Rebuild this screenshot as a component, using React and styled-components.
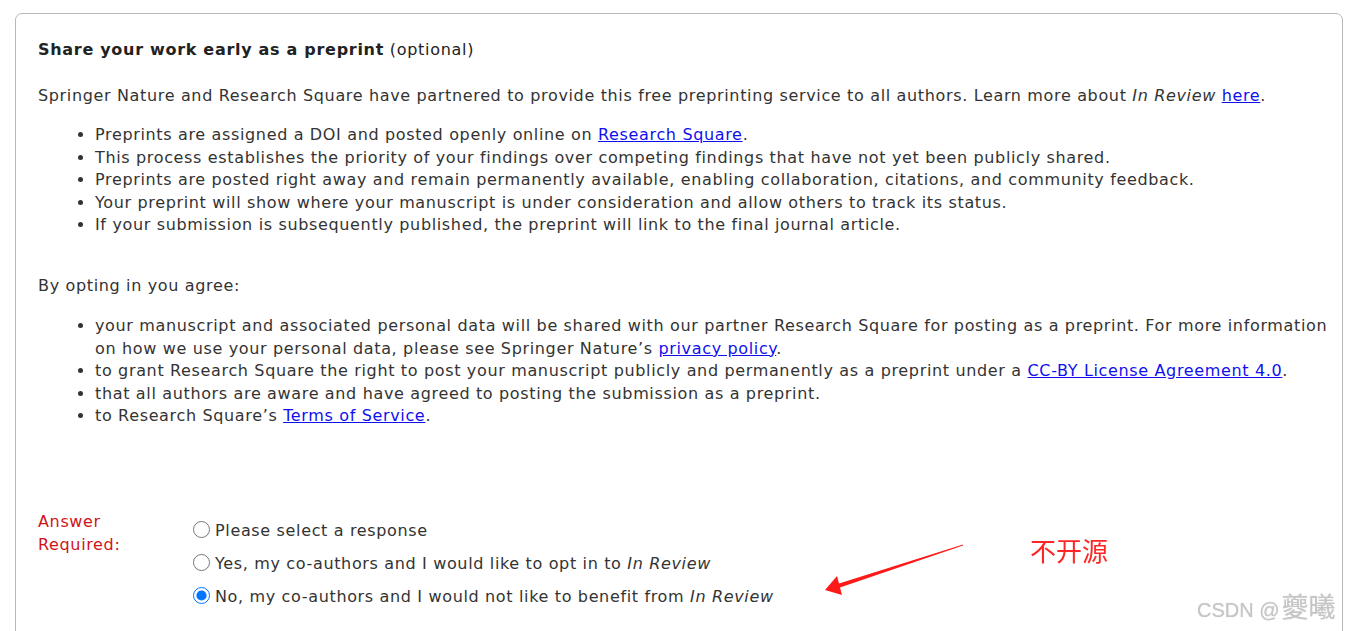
import React from "react";
import styled, { createGlobalStyle } from "styled-components";

const GlobalStyle = createGlobalStyle`
  html, body {
    margin: 0;
    padding: 0;
    overflow: hidden;
    background: #fff;
  }
`;

const Page = styled.div`
  padding: 13px 10px 0 15px;
  font-family: "DejaVu Sans", Verdana, sans-serif;
  font-size: 16px;
  letter-spacing: 0.65px;
  color: #333;
`;

const Card = styled.section`
  border: 1px solid #b8b8b8;
  border-radius: 7px;
  padding: 25px 4px 200px 22px;
  line-height: 22.5px;
`;

const Heading = styled.h2`
  margin: 0;
  font-size: 16px;
  font-weight: normal;
  letter-spacing: 0.7px;
  color: #222;

  b {
    font-weight: bold;
  }
`;

const Para = styled.p`
  margin: ${props => props.top || 0}px 0 0;
`;

const List = styled.ul`
  margin: ${props => props.top}px 0 0;
  padding-left: 57px;
`;

const Link = styled.a`
  color: #1010ee;
  text-decoration: underline;
`;

const AnswerRow = styled.div`
  display: grid;
  grid-template-columns: 155px 1fr;
  margin-top: 82px;
`;

const Required = styled.div`
  color: #d0141a;
  line-height: 23px;
`;

const Options = styled.div`
  display: flex;
  flex-direction: column;
  padding-top: 7px;
`;

const Option = styled.label`
  display: flex;
  align-items: center;
  height: 33px;
  margin-top: ${props => (props.first ? "-2px" : 0)};

  input {
    width: 17px;
    height: 17px;
    margin: 0 5px 4px 0;
  }
`;

const Overlay = styled.svg`
  position: fixed;
  left: 0;
  top: 0;
  pointer-events: none;
`;

const Note = styled.div`
  position: fixed;
  left: 1030px;
  top: 532px;
  font-family: "Noto Sans CJK SC", sans-serif;
  font-size: 26px;
  line-height: 36px;
  letter-spacing: 0;
  color: #ff2525;
`;

const Watermark = styled.div`
  position: fixed;
  left: 1197px;
  top: 591px;
  font-family: "Liberation Sans", "Noto Sans CJK SC", sans-serif;
  font-size: 20px;
  line-height: 30px;
  letter-spacing: 0;
  color: #c6c6c6;
  text-shadow: 0 0 1px rgba(120, 120, 120, 0.35);
  white-space: nowrap;

  span {
    margin-left: 2px;
    font-family: "Noto Sans CJK SC", sans-serif;
    font-size: 27px;
  }
`;

export default function App() {
  return (
    <Page>
      <GlobalStyle />
      <Card>
        <Heading>
          <b>Share your work early as a preprint</b> (optional)
        </Heading>
        <Para top={23}>
          Springer Nature and Research Square have partnered to provide this
          free preprinting service to all authors. Learn more about{" "}
          <i>In Review</i> <Link href="#">here</Link>.
        </Para>
        <List top={17}>
          <li>
            Preprints are assigned a DOI and posted openly online on{" "}
            <Link href="#">Research Square</Link>.
          </li>
          <li>
            This process establishes the priority of your findings over
            competing findings that have not yet been publicly shared.
          </li>
          <li>
            Preprints are posted right away and remain permanently available,
            enabling collaboration, citations, and community feedback.
          </li>
          <li>
            Your preprint will show where your manuscript is under
            consideration and allow others to track its status.
          </li>
          <li>
            If your submission is subsequently published, the preprint will
            link to the final journal article.
          </li>
        </List>
        <Para top={38}>By opting in you agree:</Para>
        <List top={18}>
          <li>
            your manuscript and associated personal data will be shared with
            our partner Research Square for posting as a preprint. For more
            information on how we use your personal data, please see Springer
            Nature’s <Link href="#">privacy policy</Link>.
          </li>
          <li>
            to grant Research Square the right to post your manuscript publicly
            and permanently as a preprint under a{" "}
            <Link href="#">CC-BY License Agreement 4.0</Link>.
          </li>
          <li>
            that all authors are aware and have agreed to posting the
            submission as a preprint.
          </li>
          <li>
            to Research Square’s <Link href="#">Terms of Service</Link>.
          </li>
        </List>
        <AnswerRow>
          <Required>
            Answer
            <br />
            Required:
          </Required>
          <Options>
            <Option first>
              <input type="radio" name="inreview" />
              Please select a response
            </Option>
            <Option>
              <input type="radio" name="inreview" />
              <span>
                Yes, my co-authors and I would like to opt in to{" "}
                <i>In Review</i>
              </span>
            </Option>
            <Option>
              <input type="radio" name="inreview" defaultChecked />
              <span>
                No, my co-authors and I would not like to benefit from{" "}
                <i>In Review</i>
              </span>
            </Option>
          </Options>
        </AnswerRow>
      </Card>
      <Overlay width="1353" height="631" viewBox="0 0 1353 631">
        <polygon
          points="825,590 837,576 839,583.5 963,544.5 963,545.5 840,587.5 842,595"
          fill="#ff1a1a"
        />
      </Overlay>
      <Note>不开源</Note>
      <Watermark>
        CSDN @<span>夔曦</span>
      </Watermark>
    </Page>
  );
}
